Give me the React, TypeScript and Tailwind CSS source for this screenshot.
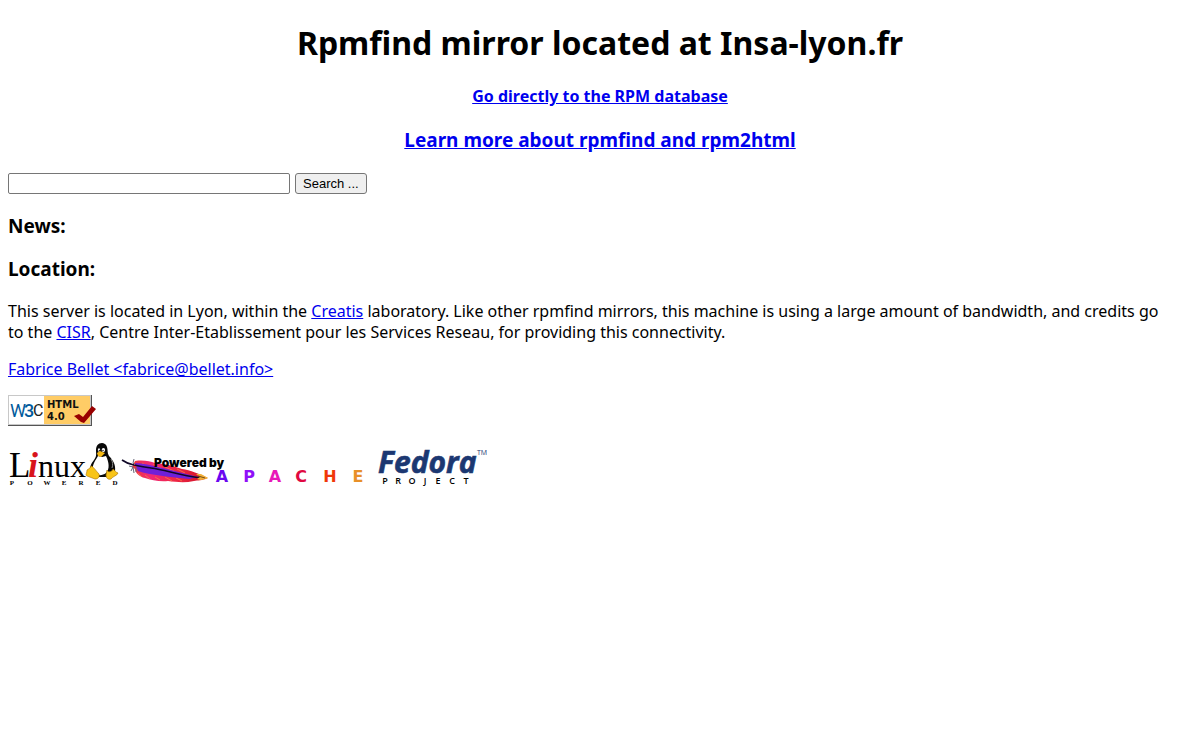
import type { ReactNode } from "react";

const POWERED = [
  { char: "P", x: 4 },
  { char: "O", x: 22 },
  { char: "W", x: 39 },
  { char: "E", x: 56 },
  { char: "R", x: 73 },
  { char: "E", x: 90 },
  { char: "D", x: 107 },
];

const APACHE = [
  { char: "A", x: 101, color: "#6a08f0" },
  { char: "P", x: 128, color: "#9010f8" },
  { char: "A", x: 154, color: "#e818b8" },
  { char: "C", x: 180, color: "#e00840" },
  { char: "H", x: 209, color: "#f03808" },
  { char: "E", x: 237, color: "#e89028" },
];

const PROJECT = [
  { char: "P", x: 8 },
  { char: "R", x: 21 },
  { char: "O", x: 35 },
  { char: "J", x: 48 },
  { char: "E", x: 61 },
  { char: "C", x: 75 },
  { char: "T", x: 89 },
];

function TextLink({ href, children }: { href: string; children: ReactNode }) {
  return (
    <a href={href} className="text-[#0000ee] underline">
      {children}
    </a>
  );
}

function HtmlBadge() {
  return (
    <svg width="88" height="31" viewBox="0 0 88 31" role="img" aria-label="HTML 4.0">
      <rect x="0" y="0" width="84" height="31" fill="#555" />
      <rect x="0" y="0" width="83" height="30" fill="#c8c8c8" />
      <rect x="1" y="1" width="81" height="28" fill="#fff" />
      <rect x="36" y="1" width="46" height="28" fill="#ffcc66" />
      <g fontFamily="Roboto, sans-serif" fontSize="18">
        <text x="2" y="22" fill="#005a9c">W</text>
        <text x="16" y="22" fill="#005a9c" fontWeight="500">3</text>
        <text x="25" y="21" fill="#222" fontSize="16">C</text>
      </g>
      <g fontFamily="'DejaVu Sans', sans-serif" fontSize="10" fontWeight="700" fill="#111">
        <text x="39" y="13">HTML</text>
        <text x="39" y="25">4.0</text>
      </g>
      <path d="M66 21 L71 19 L75 22 L84 11 L88 14 L76 28 L73 27 Z" fill="#990000" />
    </svg>
  );
}

function LinuxLogo() {
  return (
    <svg width="112" height="45" viewBox="0 0 112 45" role="img" aria-label="Linux Powered">
      <g fontFamily="'Liberation Serif', serif" fontSize="32" fill="#000">
        <text x="1" y="35" fontSize="35">L</text>
        <text x="20" y="35" fill="#d8141c" fontSize="36" fontStyle="italic" fontWeight="700">i</text>
        <text x="30" y="35">nux</text>
      </g>
      <g fontFamily="'Liberation Serif', serif" fontSize="7" fontWeight="700" textAnchor="middle">
        {POWERED.map((letter) => (
          <text key={letter.x} x={letter.x} y="43">{letter.char}</text>
        ))}
      </g>
      {/* Tux */}
      <path
        d="M94 1 C90 1 88 4 88 8 C88 12 89 14 86 18 C83 22 81 25 83 30 L88 35 L101 35 L107 29 C108 23 105 18 101 14 C99 11 100 8 99 5 C98 2 96 1 94 1 Z"
        fill="#080808"
      />
      <path d="M90 14 C88 18 84 22 85 28 C86 33 93 35 98 31 C102 27 101 20 98 14 L94 15 Z" fill="#fff" />
      <ellipse cx="91" cy="8" rx="1.2" ry="1.8" fill="#fff" />
      <ellipse cx="95.4" cy="8" rx="1.7" ry="2" fill="#fff" />
      <circle cx="91.3" cy="8.4" r="0.6" />
      <circle cx="95" cy="8.4" r="0.7" />
      <path d="M89 11 L92 9 L97 11 L93 15 L90 14 Z" fill="#f4b814" />
      <path d="M103 17 C105 20 105 23 104 26" stroke="#aaa" strokeWidth="0.8" fill="none" />
      <path
        d="M83 24 C85 24 88 29 91 32 C92 35 90 37 87 37 L79 34 C77 33 79 31 79 28 C80 27 82 27 83 24 Z"
        fill="#f8c418"
        stroke="#a87000"
        strokeWidth="0.6"
      />
      <path
        d="M99 28 C100 31 104 30 105 27 C107 28 107 30 110 31 C109 34 105 34 103 37 C100 38 98 36 98 33 Z"
        fill="#f8c418"
        stroke="#a87000"
        strokeWidth="0.6"
      />
    </svg>
  );
}

function ApacheLogo() {
  return (
    <svg width="255" height="32" viewBox="0 0 255 32" role="img" aria-label="Powered by Apache">
      <defs>
        <linearGradient id="feather" x1="0" x2="1" y1="0" y2="0">
          <stop offset="0" stopColor="#f03838" />
          <stop offset="0.25" stopColor="#f02878" />
          <stop offset="0.55" stopColor="#f02848" />
          <stop offset="0.85" stopColor="#d81830" />
          <stop offset="1" stopColor="#e88820" />
        </linearGradient>
      </defs>
      <path
        d="M14 6 C22 5 29 6 34 8 C45 9 53 11 61 14 C69 15 79 19 87 23 C81 26 77 25 73 26 C64 28 55 27 47 26 C39 27 30 25 24 23 C18 22 14 17 14 14 L11 12 Z"
        fill="url(#feather)"
      />
      <path
        d="M17 18 l4 4 M24 20 l5 4 M34 22 l5 3 M44 22 l7 4 M55 23 l6 3 M21 8 l7 4 M32 9 l9 5 M44 12 l9 4 M56 14 l8 4"
        stroke="#f87048"
        strokeWidth="0.9"
      />
      <path d="M14 8 C24 8 36 12 50 15 L77 22 L68 24 C50 22 29 20 17 16 Z" fill="#7020d8" />
      <path d="M1 5 C8 10 17 11 30 13 C45 15 57 20 80 23" stroke="#100828" strokeWidth="1.6" fill="none" />
      <path d="M13 4 L12 8 L14 10 M8 11 L12 12 L10 16 M12 12 L13 18 M15 12 L15 17" stroke="#667" strokeWidth="1" fill="none" />
      <path d="M75 19 L80 19 L87 23 L80 25 L76 24 L79 22 Z" fill="#f0b038" />
      <path d="M77 21 L84 23" stroke="#503010" strokeWidth="0.8" />
      <text x="33" y="12" fontFamily="Inter, sans-serif" fontSize="12" fontWeight="900">
        Powered by
      </text>
      <g fontFamily="'DejaVu Sans', sans-serif" fontSize="16" fontWeight="700" textAnchor="middle">
        {APACHE.map((letter) => (
          <text key={letter.x} x={letter.x} y="27" fill={letter.color}>{letter.char}</text>
        ))}
      </g>
    </svg>
  );
}

function FedoraLogo() {
  return (
    <svg width="112" height="44" viewBox="0 0 112 44" role="img" aria-label="Fedora Project">
      <text
        x="1"
        y="30"
        fontFamily="'Open Sans', sans-serif"
        fontSize="30"
        fontWeight="700"
        fontStyle="italic"
        fill="#1c3872"
        stroke="#1c3872"
        strokeWidth="0.6"
      >
        Fedora
      </text>
      <text x="100" y="12" fontFamily="'Open Sans', sans-serif" fontSize="7" fill="#1c3872">TM</text>
      <g fontFamily="'Open Sans', sans-serif" fontSize="9" fontWeight="600" textAnchor="middle">
        {PROJECT.map((letter) => (
          <text key={letter.x} x={letter.x} y="41">{letter.char}</text>
        ))}
      </g>
    </svg>
  );
}

export default function App() {
  return (
    <main className="bg-white px-2 pt-5 font-['Noto_Sans',sans-serif] text-base leading-[21px] text-black">
      <header className="text-center font-bold">
        <h1 className="text-[32px] leading-[46px]">Rpmfind mirror located at Insa-lyon.fr</h1>
        <h4 className="mt-5">
          <TextLink href="#rpm">Go directly to the RPM database</TextLink>
        </h4>
        <h3 className="mt-[22px] text-[19px] leading-[23px]">
          <TextLink href="#about">Learn more about rpmfind and rpm2html</TextLink>
        </h3>
      </header>

      <form className="mt-[21px] flex gap-[5px] font-['Liberation_Sans',sans-serif] text-[13px] leading-4">
        <input
          type="text"
          name="query"
          aria-label="Search"
          className="h-[21px] w-[282px] rounded-xs border border-[#767676] bg-white px-px"
        />
        <button
          type="submit"
          className="h-[21px] rounded-[3px] border border-[#767676] bg-[#efefef] px-[7px]"
        >
          Search ...
        </button>
      </form>

      <h3 className="mt-[21px] text-[19px] leading-[23px] font-bold">News:</h3>
      <h3 className="mt-5 text-[19px] leading-[23px] font-bold">Location:</h3>

      <p className="mt-5">
        This server is located in Lyon, within the <TextLink href="#creatis">Creatis</TextLink>{" "}
        laboratory. Like other rpmfind mirrors, this machine is using a large amount of bandwidth,
        and credits go <br />
        to the <TextLink href="#cisr">CISR</TextLink>, Centre Inter-Etablissement pour les Services
        Reseau, for providing this connectivity.
      </p>
      <p className="mt-4">
        <TextLink href="mailto:fabrice@bellet.info">
          Fabrice Bellet &lt;fabrice@bellet.info&gt;
        </TextLink>
      </p>

      <div className="mt-[15px] flex">
        <a href="#validator">
          <HtmlBadge />
        </a>
      </div>
      <div className="mt-4 flex items-end gap-px">
        <a href="#linux">
          <LinuxLogo />
        </a>
        <a href="#apache">
          <ApacheLogo />
        </a>
        <a href="#fedora">
          <FedoraLogo />
        </a>
      </div>
    </main>
  );
}
